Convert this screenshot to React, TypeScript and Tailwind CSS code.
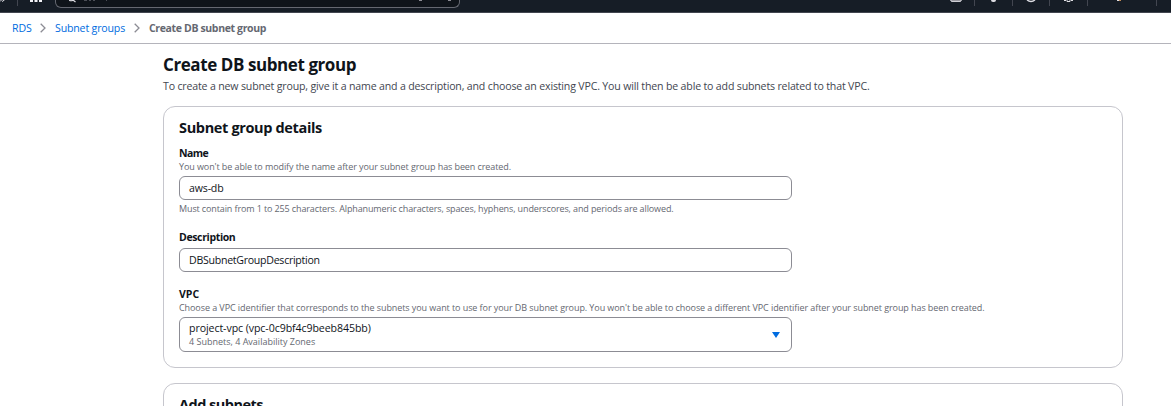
import type { ReactNode } from "react";

function Chevron() {
  return (
    <svg className="mx-[9px] h-[10px] w-[6px] shrink-0" viewBox="0 0 6 10" fill="none">
      <path d="M0.7 0.7L5 5L0.7 9.3" stroke="#8c8c94" strokeWidth="1.3" />
    </svg>
  );
}

function Divider() {
  return <span className="h-[6px] w-px shrink-0 bg-[#424650]" />;
}

function TopBar() {
  return (
    <header className="flex h-[13px] items-start overflow-hidden border-b border-[#424650] bg-[#161d26]">
      <svg className="h-[4px] w-[17px] shrink-0" viewBox="0 0 17 4">
        <path d="M0 1.5L1.5 0M2 1.5L4.5 0" stroke="#dedee3" strokeWidth="1" />
      </svg>
      <Divider />
      <svg className="ml-[12px] h-[2px] w-[12px] shrink-0" viewBox="0 0 12 2" fill="#f3f3f7">
        <rect width="3" height="2" />
        <rect x="4.5" width="3" height="2" />
        <rect x="9" width="3" height="2" />
      </svg>
      <div className="ml-[13px] flex h-[8px] w-[405px] shrink-0 items-start rounded-b-[6px] border border-t-0 border-[#656871] bg-[#0f141a]">
        <svg className="ml-[13px] h-[3px] w-[50px]" viewBox="0 0 50 3" fill="none">
          <path d="M0 0Q2 1.5 4 0L6.5 2" stroke="#dedee3" strokeWidth="1.2" />
          <path d="M15 .5h3M20 .5h2M24 .5h2M37 .5h1" stroke="#4b4e56" />
        </svg>
        <span className="ml-[300px] h-px w-[3px] bg-[#8c8c94]" />
        <span className="ml-[26px] h-px w-[3px] bg-[#8c8c94]" />
      </div>
      <div className="ml-auto flex items-start">
        <svg className="mr-[12px] h-[3px] w-[12px]" viewBox="0 0 12 3">
          <path d="M.7 0Q.7 1.4 2 1.4H10Q11.3 1.4 11.3 0" fill="#8c8c94" stroke="#dedee3" strokeWidth="1" />
        </svg>
        <Divider />
        <span className="mx-[16px] h-[2px] w-[5px] rounded-b-full bg-[#dedee3]" />
        <Divider />
        <svg className="mx-[13px] h-[3px] w-[10px]" viewBox="0 0 10 3">
          <path d="M1 0Q5 3 9 0" fill="none" stroke="#dedee3" strokeWidth="1.4" />
        </svg>
        <Divider />
        <svg className="mx-[14px] h-[3px] w-[9px]" viewBox="0 0 9 3">
          <path d="M0 .5H2M3 0V1.5H6V0M7 .5H9" fill="none" stroke="#dedee3" />
        </svg>
        <Divider />
        <span className="ml-[29px] flex">
          <span className="h-px w-[2px] bg-[#dedee3]" />
          <span className="h-px w-[2px] bg-[#c28a54]" />
        </span>
        <span className="ml-[35px] mr-[14px] flex">
          <Divider />
        </span>
      </div>
    </header>
  );
}

function Breadcrumbs() {
  return (
    <nav className="flex h-[31px] items-center border-b border-[#b4b4bb] pl-[12px] text-[10.6px] leading-[16px] whitespace-nowrap text-[#006ce0]">
      <a className="w-[19px] tracking-[-0.15px]">RDS</a>
      <Chevron />
      <a className="w-[70px] tracking-[-0.17px]">Subnet groups</a>
      <Chevron />
      <span className="text-[10.5px] font-bold tracking-[-0.36px] text-[#656871]">Create DB subnet group</span>
    </nav>
  );
}

function Label({ children }: { children: ReactNode }) {
  return <label className="block h-[15px] text-[10.5px] leading-[15px] font-bold">{children}</label>;
}

function Hint({ children }: { children: ReactNode }) {
  return <p className="h-[12px] text-[9px] leading-[12px] whitespace-nowrap text-[#656871]">{children}</p>;
}

function TextField({ children }: { children: ReactNode }) {
  return (
    <div className="flex h-[24px] w-[613px] items-center rounded-[6px] border border-[#8c8c94] px-[9px] text-[10.6px] leading-[16px]">
      {children}
    </div>
  );
}

export default function App() {
  return (
    <div className="h-[406px] overflow-hidden bg-white font-['Open_Sans','Noto_Sans',sans-serif] text-[#0f141a]">
      <TopBar />
      <Breadcrumbs />
      <main className="ml-[163px] w-[960px] pt-[9px]">
        <h1 className="h-[24px] text-[17px] leading-[24px] font-bold tracking-[-0.42px]">Create DB subnet group</h1>
        <p className="mt-px h-[16px] text-[10.6px] leading-[16px] tracking-[-0.173px] whitespace-nowrap text-[#424650]">
          To create a new subnet group, give it a name and a description, and choose an existing VPC. You will then be able to add subnets related to that VPC.
        </p>
        <section className="mt-[12px] h-[262px] rounded-[12px] border border-[#c6c6cd] px-[15px] pt-[11px]">
          <h2 className="h-[20px] text-[14.5px] leading-[20px] font-bold tracking-[-0.35px]">Subnet group details</h2>
          <div className="mt-[8px]">
            <Label><span className="tracking-[-0.6px]">Name</span></Label>
            <Hint><span className="tracking-[-0.088px]">You won't be able to modify the name after your subnet group has been created.</span></Hint>
            <div className="mt-[3px] mb-[3px]">
              <TextField><span className="tracking-[-0.17px]">aws-db</span></TextField>
            </div>
            <Hint><span className="tracking-[-0.119px]">Must contain from 1 to 255 characters. Alphanumeric characters, spaces, hyphens, underscores, and periods are allowed.</span></Hint>
          </div>
          <div className="mt-[15px]">
            <Label><span className="tracking-[-0.36px]">Description</span></Label>
            <div className="mt-[3px]">
              <TextField><span className="tracking-[-0.28px]">DBSubnetGroupDescription</span></TextField>
            </div>
          </div>
          <div className="mt-[15px]">
            <Label>VPC</Label>
            <Hint><span className="tracking-[-0.076px]">Choose a VPC identifier that corresponds to the subnets you want to use for your DB subnet group. You won't be able to choose a different VPC identifier after your subnet group has been created.</span></Hint>
            <div className="mt-[3px] flex h-[35px] w-[613px] items-center justify-between rounded-[6px] border border-[#8c8c94] pr-[11px] pl-[9px]">
              <div>
                <div className="mb-px h-[14px] text-[10.6px] leading-[14px] tracking-[-0.08px]">project-vpc (vpc-0c9bf4c9beeb845bb)</div>
                <Hint>4 Subnets, 4 Availability Zones</Hint>
              </div>
              <svg className="h-[6px] w-[8px]" viewBox="0 0 8 6">
                <path d="M0 0H8L4 6Z" fill="#006ce0" />
              </svg>
            </div>
          </div>
        </section>
        <section className="mt-[15px] h-[100px] rounded-[12px] border border-[#c6c6cd] px-[15px] pt-[11px]">
          <h2 className="h-[20px] text-[14.5px] leading-[20px] font-bold tracking-[-0.51px]">Add subnets</h2>
        </section>
      </main>
    </div>
  );
}
